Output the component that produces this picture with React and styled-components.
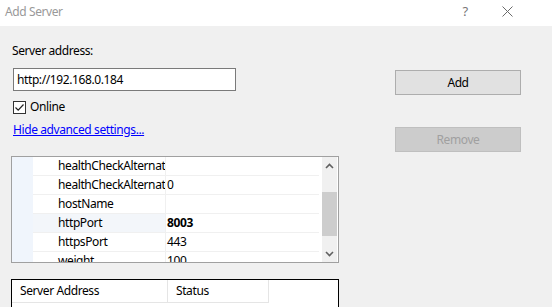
import React from 'react'
import styled, { createGlobalStyle } from 'styled-components'

const GlobalStyle = createGlobalStyle`
  html, body { margin: 0; padding: 0; background: #f0f0f0; }
  body { font-family: 'Noto Sans', 'Open Sans', sans-serif; font-size: 12px; letter-spacing: -0.4px; }
`

const props = [
  { name: 'healthCheckAlternat', value: '' },
  { name: 'healthCheckAlternat', value: '0' },
  { name: 'hostName', value: '' },
  { name: 'httpPort', value: '8003', bold: true, selected: true },
  { name: 'httpsPort', value: '443' },
  { name: 'weight', value: '100' },
]

function App() {
  return (
    <Window>
      <GlobalStyle />
      <TitleBar>
        <Title>Add Server</Title>
        <TitleButtons>
          <TitleGlyph>?</TitleGlyph>
          <TitleGlyph>
            <svg width="11" height="11" viewBox="0 0 11 11">
              <path d="M0.5 0.5 L10.5 10.5 M10.5 0.5 L0.5 10.5" stroke="#6a6a6a" strokeWidth="1" fill="none" />
            </svg>
          </TitleGlyph>
        </TitleButtons>
      </TitleBar>
      <Body>
        <LeftCol>
          <Label>Server address:</Label>
          <TextBox defaultValue="http://192.168.0.184" />
          <CheckRow>
            <CheckBox>
              <svg width="11" height="11" viewBox="0 0 11 11">
                <path d="M1.5 5.5 L4.2 8.2 L9.5 2.5" stroke="#222" strokeWidth="1.2" fill="none" />
              </svg>
            </CheckBox>
            <span>Online</span>
          </CheckRow>
          <LinkText href="#">Hide advanced settings...</LinkText>
          <PropGrid>
            <PropRows>
              {props.map((p, i) => (
                <PropRow key={i}>
                  <Margin />
                  <NameCell $selected={p.selected}>{p.name}</NameCell>
                  <ValueCell $bold={p.bold}>{p.value}</ValueCell>
                </PropRow>
              ))}
            </PropRows>
            <ScrollBar>
              <Arrow>
                <svg width="9" height="6" viewBox="0 0 9 6">
                  <path d="M1 5 L4.5 1.5 L8 5" stroke="#606060" strokeWidth="1.6" fill="none" />
                </svg>
              </Arrow>
              <Track>
                <Thumb />
              </Track>
              <Arrow>
                <svg width="9" height="6" viewBox="0 0 9 6">
                  <path d="M1 1 L4.5 4.5 L8 1" stroke="#606060" strokeWidth="1.6" fill="none" />
                </svg>
              </Arrow>
            </ScrollBar>
          </PropGrid>
          <ListView>
            <HeaderRow>
              <HeaderCell $w={156}>Server Address</HeaderCell>
              <HeaderCell $w={101}>Status</HeaderCell>
            </HeaderRow>
          </ListView>
        </LeftCol>
        <RightCol>
          <Button>Add</Button>
          <Button $disabled>Remove</Button>
        </RightCol>
      </Body>
    </Window>
  )
}

const Window = styled.div`
  width: 552px;
  height: 307px;
  overflow: hidden;
  background: #f0f0f0;
  color: #000;
`

const TitleBar = styled.div`
  height: 26px;
  background: #fff;
  display: flex;
  align-items: center;
  justify-content: space-between;
  padding: 0 24px 0 5px;
`

const Title = styled.div`
  color: #999;
  font-size: 12px;
  margin-top: -3px;
`

const TitleButtons = styled.div`
  display: flex;
  align-items: center;
  margin-top: -4px;
`

const TitleGlyph = styled.div`
  width: 42px;
  display: flex;
  justify-content: center;
  color: #777;
  font-size: 13px;
`

const Body = styled.div`
  display: flex;
  padding-left: 11px;
`

const LeftCol = styled.div`
  width: 328px;
  display: flex;
  flex-direction: column;
`

const Label = styled.div`
  margin-top: 17px;
  margin-left: 1px;
  line-height: 16px;
`

const TextBox = styled.input`
  margin-top: 9px;
  margin-left: 2px;
  width: 223px;
  height: 23px;
  box-sizing: border-box;
  border: 1px solid #7a7a7a;
  background: #fff;
  font-family: inherit;
  font-size: 12px;
  letter-spacing: -0.4px;
  padding: 0 3px;
  outline: none;
`

const CheckRow = styled.div`
  display: flex;
  align-items: center;
  gap: 4px;
  margin-top: 8px;
  margin-left: 2px;
  line-height: 16px;
`

const CheckBox = styled.div`
  width: 13px;
  height: 13px;
  box-sizing: border-box;
  border: 1px solid #333;
  background: #fff;
  display: flex;
  align-items: center;
  justify-content: center;
`

const LinkText = styled.a`
  margin-top: 7px;
  margin-left: 2px;
  color: #0000ff;
  text-decoration: underline;
  line-height: 16px;
  align-self: flex-start;
`

const PropGrid = styled.div`
  margin-top: 18px;
  height: 107px;
  box-sizing: border-box;
  border: 1px solid #a0a0a0;
  background: #fff;
  display: flex;
  overflow: hidden;
`

const PropRows = styled.div`
  flex: 1;
  display: flex;
  flex-direction: column;
`

const PropRow = styled.div`
  display: flex;
  height: 19px;
  flex-shrink: 0;
  line-height: 18px;
`

const Margin = styled.div`
  width: 21px;
  background: #f0f5fc;
`

const NameCell = styled.div`
  width: 133px;
  padding-left: 25px;
  box-sizing: border-box;
  border-bottom: 1px solid #f0f0f0;
  border-right: 1px solid #f0f0f0;
  background: ${p => (p.$selected ? '#f3f6fa' : '#fff')};
  white-space: nowrap;
  overflow: hidden;
`

const ValueCell = styled.div`
  flex: 1;
  padding-left: 1px;
  border-bottom: 1px solid #f0f0f0;
  font-weight: ${p => (p.$bold ? 700 : 400)};
  margin-right: 3px;
`

const ScrollBar = styled.div`
  width: 15px;
  background: #f0f0f0;
  display: flex;
  flex-direction: column;
  margin-right: 1px;
`

const Arrow = styled.div`
  height: 17px;
  display: flex;
  align-items: center;
  justify-content: center;
`

const Track = styled.div`
  flex: 1;
  padding-top: 18px;
`

const Thumb = styled.div`
  height: 44px;
  background: #cdcdcd;
`

const ListView = styled.div`
  margin-top: 16px;
  height: 60px;
  box-sizing: border-box;
  border: 1px solid #000;
  background: #fff;
`

const HeaderRow = styled.div`
  display: flex;
  height: 23px;
`

const HeaderCell = styled.div`
  width: ${p => p.$w}px;
  padding-left: 8px;
  box-sizing: border-box;
  border-right: 1px solid #e5e5e5;
  border-bottom: 1px solid #e5e5e5;
  line-height: 22px;
`

const RightCol = styled.div`
  margin-left: 56px;
  display: flex;
  flex-direction: column;
  gap: 32px;
  padding-top: 44px;
`

const Button = styled.button`
  width: 126px;
  height: 25px;
  box-sizing: border-box;
  border: 1px solid ${p => (p.$disabled ? '#bfbfbf' : '#adadad')};
  background: ${p => (p.$disabled ? '#cccccc' : '#e1e1e1')};
  color: ${p => (p.$disabled ? '#a0a0a0' : '#000')};
  font-family: inherit;
  font-size: 12px;
  letter-spacing: -0.4px;
  padding: 0;
`

export default App
